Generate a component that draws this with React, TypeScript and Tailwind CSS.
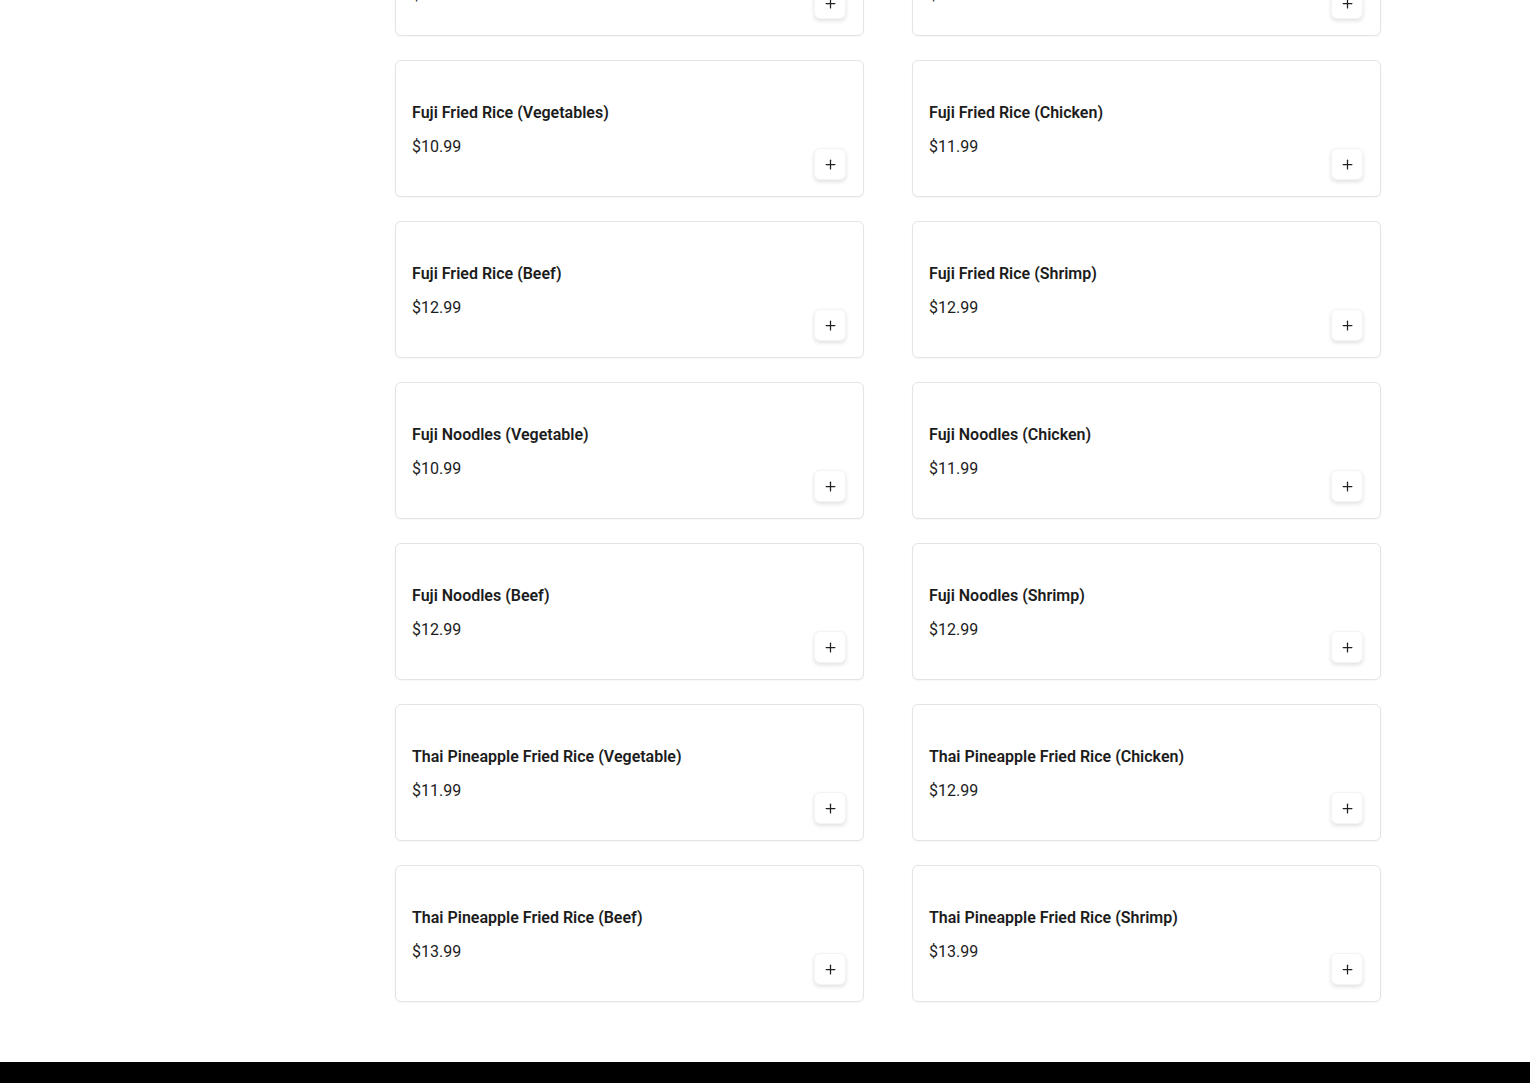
import { Plus } from "lucide-react";

type Item = { name: string; price: string; desc?: string };

const items: Item[] = [
    { name: "Fuji Fried Rice (Vegetables)", price: "$10.99" },
    { name: "Fuji Fried Rice (Chicken)", price: "$11.99" },
    { name: "Fuji Fried Rice (Beef)", price: "$12.99" },
    { name: "Fuji Fried Rice (Shrimp)", price: "$12.99" },
    { name: "Fuji Noodles (Vegetable)", price: "$10.99" },
    { name: "Fuji Noodles (Chicken)", price: "$11.99" },
    { name: "Fuji Noodles (Beef)", price: "$12.99" },
    { name: "Fuji Noodles (Shrimp)", price: "$12.99" },
    { name: "Thai Pineapple Fried Rice (Vegetable)", price: "$11.99" },
    { name: "Thai Pineapple Fried Rice (Chicken)", price: "$12.99" },
    { name: "Thai Pineapple Fried Rice (Beef)", price: "$13.99" },
    { name: "Thai Pineapple Fried Rice (Shrimp)", price: "$13.99" },
];

function AddButton() {
    return (
        <button className="w-8 h-8 shrink-0 self-end flex items-center justify-center bg-white border border-gray-100 rounded-md shadow-[0_2px_4px_rgba(0,0,0,0.12)] text-[#222]">
            <Plus size={15} strokeWidth={2} />
        </button>
    );
}

function MenuCard({ item }: { item: Item }) {
    return (
        <div className="flex gap-4 min-h-[137px] py-4 pl-4 pr-[17px] bg-white border border-[#e4e4e4] rounded-md shadow-[0_1px_2px_rgba(0,0,0,0.04)]">
            <div className="flex-1 flex flex-col justify-center gap-[10px] pt-[2px]">
                <h3 className="text-base leading-6 font-semibold text-[#1c1c1c]">{item.name}</h3>
                <p className="text-base leading-6 text-[#1c1c1c]">{item.price}</p>
            </div>
            <AddButton />
        </div>
    );
}

function TopCard({ item }: { item: Item }) {
    return (
        <div className="flex gap-4 py-4 pl-4 pr-[17px] bg-white border border-[#e4e4e4] rounded-md shadow-[0_1px_2px_rgba(0,0,0,0.04)]">
            <div className="flex-1 flex flex-col gap-2 pt-[8px] pb-[12px]">
                <h3 className="text-base leading-6 font-semibold text-[#1c1c1c]">{item.name}</h3>
                <p className="text-sm leading-5 text-gray-500">{item.desc}</p>
                <p className="text-base leading-6 text-[#1c1c1c]">{item.price}</p>
            </div>
            <AddButton />
        </div>
    );
}

export default function App() {
    return (
        <div className="min-h-screen bg-white overflow-hidden" style={{ fontFamily: "Roboto, 'Liberation Sans', sans-serif" }}>
            <div className="max-w-[1280px] mx-auto px-6 flex gap-6">
                {/* category sidebar is scrolled out of view */}
                <aside className="w-[222px] shrink-0" />
                <main className="flex-1 mt-[-102px] pb-[60px]">
                    <div className="grid grid-cols-2 gap-x-12 gap-y-6">
                        <TopCard item={{ name: "Fuji Special Combo", desc: "Served with miso soup and salad.", price: "$12.99" }} />
                        <TopCard item={{ name: "Fuji Chef Special", desc: "Served with miso soup and salad.", price: "$14.99" }} />
                        {items.map((item) => (
                            <MenuCard key={item.name} item={item} />
                        ))}
                    </div>
                </main>
            </div>
            <footer className="bg-black h-[240px]" />
        </div>
    );
}
